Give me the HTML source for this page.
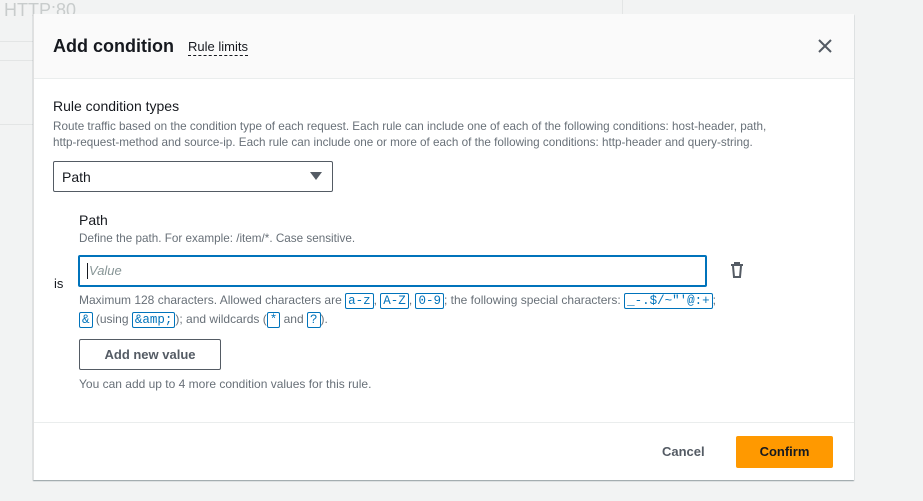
<!DOCTYPE html>
<html><head><meta charset="utf-8"><style>
body{margin:0;width:923px;height:501px;background:#f2f3f3;font-family:"Liberation Sans",sans-serif;position:relative;overflow:hidden;color:#16191f}
.a{position:absolute}
.m{left:33px;top:14px;width:820px;height:466px;background:#fff;box-shadow:0 1px 1px rgba(0,28,36,.4);border-left:1px solid #e0e0e0}
.hd{left:0;top:0;width:820px;height:64px;background:#fafafa;border-bottom:1px solid #eaeded}
.code{font-family:"Liberation Mono",monospace;color:#0073bb;border:1px solid #0073bb;border-radius:2px;padding:0 2px;font-size:12.5px}
.s{font-size:11.7px;color:#687078}
.b{font-size:12px;color:#687078}
</style></head><body>
<div class="a" style="left:4px;top:0px;font-size:18px;color:#c8cccc">HTTP:80</div>
<div class="a" style="left:0;top:41px;width:33px;height:1px;background:#e3e5e5"></div>
<div class="a" style="left:0;top:60px;width:33px;height:1px;background:#e3e5e5"></div>
<div class="a" style="left:0;top:124px;width:33px;height:1px;background:#e3e5e5"></div>
<div class="a" style="left:622px;top:0;width:1px;height:14px;background:#e3e5e5"></div>
<div class="a m">
 <div class="a hd"></div>
 <div class="a" style="left:19px;top:22px;font-size:18px;font-weight:bold">Add condition</div>
 <div class="a" style="left:154px;top:25px;font-size:13px;border-bottom:1px dashed #16191f;line-height:16px">Rule limits</div>
 <svg class="a" style="left:783px;top:24px" width="16" height="16"><path d="M2 2L14 14M14 2L2 14" stroke="#545b64" stroke-width="2"/></svg>
 <div class="a" style="left:19px;top:84px;font-size:14px">Rule condition types</div>
 <div class="a s" style="left:19px;top:105px;line-height:16px;white-space:nowrap">Route traffic based on the condition type of each request. Each rule can include one of each of the following conditions: host-header, path,<br>http-request-method and source-ip. Each rule can include one or more of each of the following conditions: http-header and query-string.</div>
 <div class="a" style="left:19px;top:147px;width:278px;height:29px;border:1px solid #545b64;border-radius:2px"></div>
 <div class="a" style="left:28px;top:155px;font-size:14px">Path</div>
 <svg class="a" style="left:276px;top:158px" width="12" height="9"><path d="M0 0H12L6 8Z" fill="#545b64"/></svg>
 <div class="a" style="left:45px;top:198px;font-size:14px">Path</div>
 <div class="a s" style="left:45px;top:218px">Define the path. For example: /item/*. Case sensitive.</div>
 <div class="a" style="left:20px;top:262px;font-size:13px">is</div>
 <div class="a" style="left:44px;top:241px;width:625px;height:28px;border:2px solid #0073bb;border-radius:2px"></div>
 <div class="a" style="left:53px;top:249px;width:1px;height:16px;background:#16191f"></div>
 <div class="a" style="left:55px;top:249px;font-size:13px;font-style:italic;color:#879596">Value</div>
 <svg class="a" style="left:696px;top:248px" width="14" height="16"><path d="M1 3H13M5 3V1H9V3M3 4L4 15H10L11 4" stroke="#545b64" stroke-width="2" fill="none"/></svg>
 <div class="a b" style="left:45px;top:277px;line-height:18px;white-space:nowrap">Maximum 128 characters. Allowed characters are <span class="code">a-z</span>, <span class="code">A-Z</span>, <span class="code">0-9</span>; the following special characters: <span class="code">_-.$/~"'@:+</span>;<br><span class="code">&amp;</span> (using <span class="code">&amp;amp;</span>); and wildcards (<span class="code">*</span> and <span class="code">?</span>).</div>
 <div class="a" style="left:45px;top:325px;width:140px;height:29px;border:1px solid #545b64;border-radius:2px;font-size:13px;font-weight:bold;color:#545b64;text-align:center;line-height:29px">Add new value</div>
 <div class="a b" style="left:45px;top:363px">You can add up to 4 more condition values for this rule.</div>
 <div class="a" style="left:0;top:408px;width:820px;height:1px;background:#eaeded"></div>
 <div class="a" style="left:628px;top:430px;font-size:13px;font-weight:bold;color:#545b64">Cancel</div>
 <div class="a" style="left:702px;top:422px;width:97px;height:32px;background:#ff9900;border-radius:2px;font-size:13px;font-weight:bold;text-align:center;line-height:32px">Confirm</div>
</div>
</body></html>
